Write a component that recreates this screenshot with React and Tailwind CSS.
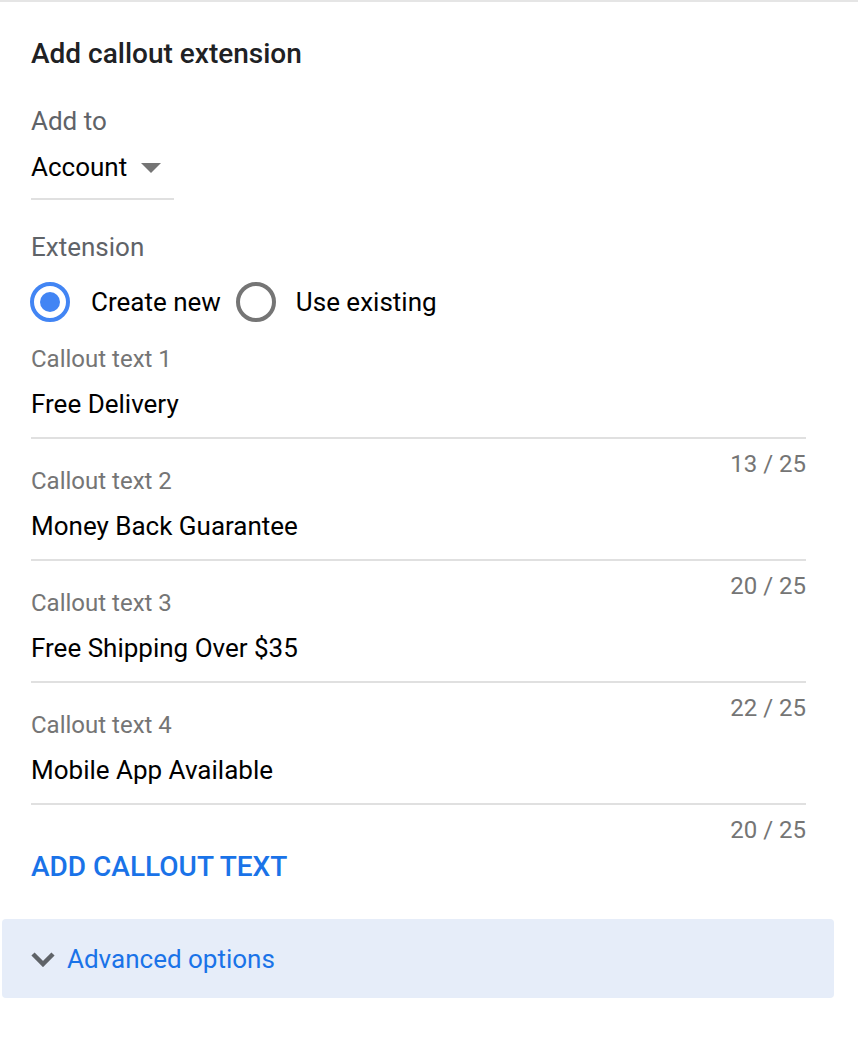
import React from "react";

function Field({ label, value, count }) {
  return (
    <div>
      <div className="text-[24px] text-[#757575] leading-none h-[24px]">{label}</div>
      <div className="text-[26px] text-black leading-none h-[26px] mt-[20px]">{value}</div>
      <div className="h-[2px] bg-[#e0e0e0] mt-[20px]" />
      <div className="h-[30px] pt-[13px] text-right text-[24px] text-[#757575] leading-none">
        <div className="h-[24px]">{count}</div>
      </div>
    </div>
  );
}

export default function App() {
  return (
    <div
      className="w-[858px] h-[1046px] bg-white border-t-2 border-[#e5e5e5] overflow-hidden"
      style={{ fontFamily: "Roboto, 'Noto Sans', sans-serif" }}
    >
      <div className="pl-[31px] pr-[52px]">
        <h1 className="text-[28px] font-medium text-[#202124] leading-none h-[28px] mt-[38px]">
          Add callout extension
        </h1>
        <div className="text-[26px] text-[#5f6368] leading-none h-[26px] mt-[40px]">Add to</div>
        <div className="w-[143px] border-b-2 border-[#e0e0e0] pb-[18px] mt-[20px]">
          <div className="flex items-center h-[26px]">
            <span className="text-[26px] text-black leading-none">Account</span>
            <svg width="20" height="10" viewBox="0 0 20 10" className="ml-[14px] mt-[2px]">
              <path d="M0 0 L20 0 L10 10 Z" fill="#757575" />
            </svg>
          </div>
        </div>
        <div className="text-[26px] text-[#5f6368] leading-none h-[26px] mt-[34px]">Extension</div>
        <div className="flex items-center h-[40px] mt-[22px] -ml-[1px]">
          <div className="w-[40px] h-[40px] rounded-full border-[4px] border-[#4285f4] flex items-center justify-center">
            <div className="w-[20px] h-[20px] rounded-full bg-[#4285f4]" />
          </div>
          <span className="text-[26px] text-black leading-none ml-[21px]">Create new</span>
          <div className="w-[40px] h-[40px] rounded-full border-[4px] border-[#757575] ml-[15px]" />
          <span className="text-[26px] text-black leading-none ml-[20px]">Use existing</span>
        </div>
        <div className="mt-[25px]">
          <Field label="Callout text 1" value="Free Delivery" count="13 / 25" />
          <Field label="Callout text 2" value="Money Back Guarantee" count="20 / 25" />
          <Field label="Callout text 3" value="Free Shipping Over $35" count="22 / 25" />
          <Field label="Callout text 4" value="Mobile App Available" count="20 / 25" />
        </div>
        <div className="text-[28px] font-medium text-[#1a73e8] leading-none h-[28px] mt-[18px]">
          ADD CALLOUT TEXT
        </div>
      </div>
      <div className="ml-[2px] w-[832px] h-[79px] mt-[38px] bg-[#e6edf9] rounded-[4px] flex items-center pl-[28px]">
        <svg width="26" height="16" viewBox="0 0 26 16">
          <path d="M3 3 L13 13 L23 3" stroke="#5f6368" strokeWidth="4.5" fill="none" />
        </svg>
        <span className="text-[26px] text-[#1a73e8] leading-none ml-[11px]">Advanced options</span>
      </div>
    </div>
  );
}
